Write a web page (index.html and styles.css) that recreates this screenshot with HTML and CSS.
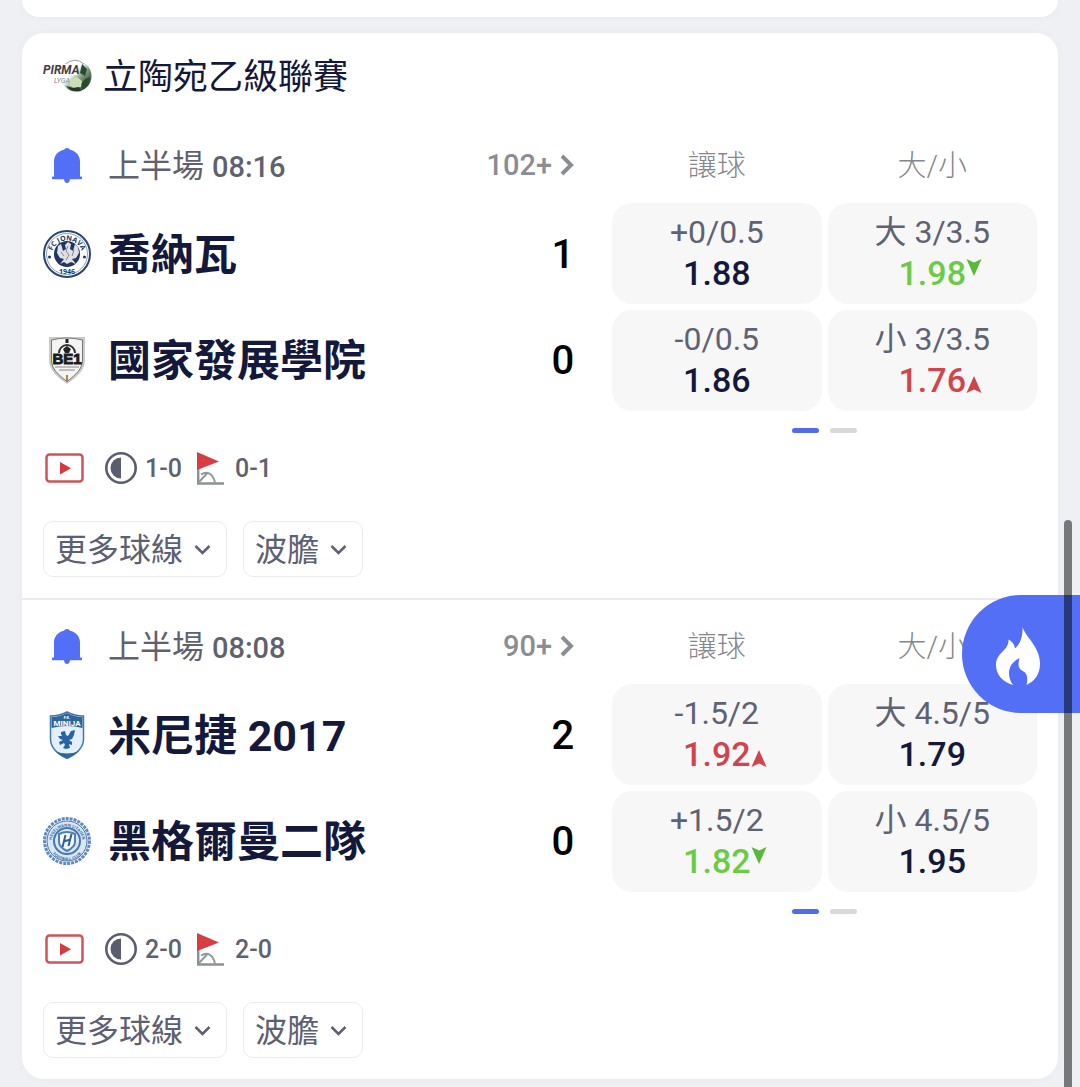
FILE: index.html
```html
<!DOCTYPE html>
<html lang="zh-Hant">
<head>
    <meta charset="UTF-8">
    <meta name="viewport" content="width=device-width, initial-scale=1.0">
    <title>立陶宛乙級聯賽</title>
    <link rel="stylesheet" href="styles.css">
</head>
<body>
    <!-- 共用圖示 -->
    <svg class="sprite" aria-hidden="true">
        <symbol id="icon-bell" viewBox="0 0 30 35">
            <path d="M15 0c1.500 0 2.400.7 2.900 1.800C24 3 28 7.500 28 13.500V28.500h1.200c.5 0 .8.300.8.800v1.200c0 .5-.3.800-.8.800H18c-.2 2.200-1.300 3.700-3 3.700s-2.800-1.500-3-3.700H.8c-.5 0-.8-.3-.8-.8v-1.200c0-.5.300-.8.800-.8H2V13.500C2 7.500 6 3 12.100 1.800 12.600.7 13.500 0 15 0z" fill="#526ff6"/>
        </symbol>
        <symbol id="icon-right" viewBox="0 0 14 22">
            <path d="M2 2l9 9-9 9" fill="none" stroke="#8b8d93" stroke-width="4"/>
        </symbol>
        <symbol id="icon-down" viewBox="0 0 17 11">
            <path d="M1.500 2l7 7 7-7" fill="none" stroke="#5d6072" stroke-width="2.500"/>
        </symbol>
        <symbol id="icon-video" viewBox="0 0 39 30">
            <rect x="1.500" y="1.500" width="36" height="27" rx="3" fill="none" stroke="#d1535a" stroke-width="2.500"/>
            <path d="M15 9v12.500l11-6.200z" fill="#d5383f"/>
        </symbol>
        <symbol id="icon-half" viewBox="0 0 32 32">
            <circle cx="16" cy="16" r="14.700" fill="none" stroke="#5a5d70" stroke-width="2.600"/>
            <path d="M16 5.500v21a10.500 10.500 0 0 1 0-21z" fill="#5a5d70"/>
        </symbol>
        <symbol id="icon-corner" viewBox="0 0 28 33">
            <path d="M1.200 15v16.500H27" fill="none" stroke="#8d9193" stroke-width="2.500"/>
            <path d="M4 22.500c6-4 12-1 14 8M2 30l8-8.500" fill="none" stroke="#8d9c9b" stroke-width="2"/>
            <path d="M0 0l22 9.500L0 18z" fill="#d73d43"/>
        </symbol>
        <symbol id="icon-rise" viewBox="0 0 16 17">
            <path d="M8 0l7.500 17L8 13.500.5 17z" fill="#d0454c"/>
        </symbol>
        <symbol id="icon-drop" viewBox="0 0 16 17">
            <path d="M8 17L.5 0 8 3.500 15.500 0z" fill="#5ab83a"/>
        </symbol>
    </svg>

    <main class="page">
        <div class="card card-prev"></div>

        <section class="card">
            <header class="league">
                <svg class="league-logo" viewBox="0 0 50 34" aria-hidden="true">
                    <defs>
                        <linearGradient id="ball" x1="0" y1="0" x2="1" y2="1">
                            <stop offset="0.400" stop-color="#fff"/>
                            <stop offset="0.600" stop-color="#7d9b7c"/>
                            <stop offset="0.900" stop-color="#1f3526"/>
                        </linearGradient>
                    </defs>
                    <circle cx="33" cy="17" r="15.500" fill="url(#ball)"/>
                    <path d="M21 6q11-9 20-1" fill="none" stroke="#9aa39c" stroke-width="1"/>
                    <path d="M39 5l5 5-2 7-5-3zM42 20l5-2-2 8-5 4-3-4z" fill="#294b30"/>
                    <path d="M28 21l6-3 5 4-1 6-7 1-5-3z" fill="#c9dfb6"/>
                    <path d="M23 27l7 2 6-1 2 4c-6 1-11 0-15-5z" fill="#26382b"/>
                    <path d="M0 5h36l-2 11H0z" fill="#fff"/>
                    <text x="0" y="15" class="logo-pirma">PIRMA</text>
                    <text x="11" y="24" class="logo-lyga">LYGA</text>
                </svg>
                <h1 class="league-name">立陶宛乙級聯賽</h1>
            </header>

            <!-- 喬納瓦 vs 國家發展學院 -->
            <article class="match">
                <div class="columns match-top">
                    <div class="status">
                        <button type="button" class="bell" aria-label="通知"><svg><use href="#icon-bell"/></svg></button>
                        <span class="period">上半場 <span class="num">08:16</span></span>
                        <a href="#" class="more"><span class="num">102+</span><svg><use href="#icon-right"/></svg></a>
                    </div>
                    <div class="market-names">
                        <span>讓球</span>
                        <span>大/小</span>
                    </div>
                </div>
                <div class="columns">
                    <div class="teams">
                        <div class="team">
                            <svg class="crest" viewBox="0 0 48 48" aria-hidden="true">
                                <defs>
                                    <path id="jonava-top" d="M8.500 26a15.500 15.500 0 0 1 31 0"/>
                                </defs>
                                <circle cx="24" cy="24" r="23" fill="#fff" stroke="#28446f" stroke-width="2"/>
                                <circle cx="24" cy="24" r="20.500" fill="none" stroke="#8ba2bd" stroke-width="1"/>
                                <circle cx="24" cy="24" r="13" fill="#20365f"/>
                                <path d="M17 34l4-5-4-1-3-5 1-7 3-2 2 7 3-2-1-4 3-3 3 2-1 5 3 2 2-7 3 3 1 6-3 5-4 1 4 5-5-2-4 2-3-2z" fill="#dfe2e5"/>
                                <path d="M25 16l-2 5 3 4-3 5M18 22l3 4M31 20l-2 6" fill="none" stroke="#7e8898" stroke-width="1"/>
                                <circle cx="6.500" cy="27" r="1.500" fill="#20365f"/>
                                <circle cx="41.500" cy="27" r="1.500" fill="#20365f"/>
                                <text class="crest-ring jonava"><textPath href="#jonava-top" startOffset="50%">FC JONAVA</textPath></text>
                                <text x="24" y="44" class="crest-ring jonava">1946</text>
                            </svg>
                            <h2 class="team-name">喬納瓦</h2>
                            <span class="score">1</span>
                        </div>
                        <div class="team">
                            <svg class="crest" viewBox="0 0 48 48" aria-hidden="true">
                                <path d="M6 1h36v23c0 10-8 17-18 24C14 41 6 34 6 24z" fill="#c9c9c7"/>
                                <path d="M8.500 4Q24 0 39.500 4v20c0 9-7 15-15.500 21.500C15.500 39 8.500 33 8.500 24z" fill="#f4f4f2" stroke="#777" stroke-width="1"/>
                                <path d="M16 17a8 8 0 0 1 16 0" fill="#fff" stroke="#333" stroke-width="2"/>
                                <path d="M24 10l4 3-2 4h-4l-2-4zM22.500 3h3v4h-3z" fill="#222"/>
                                <path d="M12 31h24M16 34h16" stroke="#888" stroke-width="1"/>
                                <path d="M23 39h2v7h-2z" fill="#ac8440"/>
                                <text x="24" y="28" class="crest-be1">BE1</text>
                            </svg>
                            <h2 class="team-name">國家發展學院</h2>
                            <span class="score">0</span>
                        </div>
                    </div>
                    <div class="odds">
                        <button type="button" class="odd"><span class="line">+0/0.5</span><span class="price">1.88</span></button>
                        <button type="button" class="odd"><span class="line">大 3/3.5</span><span class="price drop">1.98<svg><use href="#icon-drop"/></svg></span></button>
                        <button type="button" class="odd"><span class="line">-0/0.5</span><span class="price">1.86</span></button>
                        <button type="button" class="odd"><span class="line">小 3/3.5</span><span class="price rise">1.76<svg><use href="#icon-rise"/></svg></span></button>
                    </div>
                </div>
                <div class="columns">
                    <div class="pager"><i class="active"></i><i></i></div>
                </div>
                <div class="stats">
                    <svg class="icon-video"><use href="#icon-video"/></svg>
                    <svg class="icon-half"><use href="#icon-half"/></svg>
                    <span class="stat">1-0</span>
                    <svg class="icon-corner"><use href="#icon-corner"/></svg>
                    <span class="stat">0-1</span>
                </div>
                <div class="actions">
                    <button type="button" class="action">更多球線<svg><use href="#icon-down"/></svg></button>
                    <button type="button" class="action">波膽<svg><use href="#icon-down"/></svg></button>
                </div>
            </article>

            <!-- 米尼捷 2017 vs 黑格爾曼二隊 -->
            <article class="match">
                <div class="columns match-top">
                    <div class="status">
                        <button type="button" class="bell" aria-label="通知"><svg><use href="#icon-bell"/></svg></button>
                        <span class="period">上半場 <span class="num">08:08</span></span>
                        <a href="#" class="more"><span class="num">90+</span><svg><use href="#icon-right"/></svg></a>
                    </div>
                    <div class="market-names">
                        <span>讓球</span>
                        <span>大/小</span>
                    </div>
                </div>
                <div class="columns">
                    <div class="teams">
                        <div class="team">
                            <svg class="crest" viewBox="0 0 48 48" aria-hidden="true">
                                <path d="M24 1q8 4 16.500 4v23c0 9-7 15-16.500 19.500C14.500 43 7.500 37 7.500 28V5Q16 5 24 1z" fill="#e3effa" stroke="#4379ac" stroke-width="1.500"/>
                                <path d="M24 2q8 4 15.500 4v11Q24 13 8.500 17V6Q16 6 24 2z" fill="#2d659d"/>
                                <path d="M12 40q12 5 24 0-5 5-12 7-7-2-12-7z" fill="#2d659d"/>
                                <path d="M18 21l4-1 1 4 2 1 3-5 4-1-1 5-2 4-3 1 3 2v3l-3-1 1 4-4 1-3-1 2-3-1-2-4 2-1-3 4-2-3-1-2-3 4 0-1-2z" fill="#2764a5"/>
                                <text x="24" y="8" class="crest-fk">F.K.</text>
                                <text x="24" y="14.500" class="crest-minija">MINIJA</text>
                            </svg>
                            <h2 class="team-name">米尼捷 2017</h2>
                            <span class="score">2</span>
                        </div>
                        <div class="team">
                            <svg class="crest" viewBox="0 0 48 48" aria-hidden="true">
                                <defs>
                                    <path id="heg-top" d="M8.500 25a15.500 15.500 0 0 1 31 0"/>
                                    <path id="heg-bottom" d="M5.500 25a18.500 18.500 0 0 0 37 0"/>
                                </defs>
                                <circle cx="24" cy="24" r="22.500" fill="#eef4fa" stroke="#5f8abb" stroke-width="3" stroke-dasharray="3 1"/>
                                <circle cx="24" cy="24" r="20" fill="#d9e6f3" stroke="#4677b0" stroke-width="1"/>
                                <circle cx="24" cy="24" r="13" fill="#d9e6f3" stroke="#4677b0" stroke-width="2"/>
                                <path d="M16 17q8-4 16 0v8q0 5-8 9-8-4-8-9z" fill="#f7fafc" stroke="#4d7fb8" stroke-width="2"/>
                                <path d="M22.500 18l-3 12M28.500 17l-3 12M20.500 24.500l7-2" fill="none" stroke="#315f99" stroke-width="2"/>
                                <text class="crest-ring heg"><textPath href="#heg-top" startOffset="50%">HEGELMANN LITAUEN</textPath></text>
                                <text class="crest-ring heg"><textPath href="#heg-bottom" startOffset="50%">FOOTBALL CLUB</textPath></text>
                            </svg>
                            <h2 class="team-name">黑格爾曼二隊</h2>
                            <span class="score">0</span>
                        </div>
                    </div>
                    <div class="odds">
                        <button type="button" class="odd"><span class="line">-1.5/2</span><span class="price rise">1.92<svg><use href="#icon-rise"/></svg></span></button>
                        <button type="button" class="odd"><span class="line">大 4.5/5</span><span class="price">1.79</span></button>
                        <button type="button" class="odd"><span class="line">+1.5/2</span><span class="price drop">1.82<svg><use href="#icon-drop"/></svg></span></button>
                        <button type="button" class="odd"><span class="line">小 4.5/5</span><span class="price">1.95</span></button>
                    </div>
                </div>
                <div class="columns">
                    <div class="pager"><i class="active"></i><i></i></div>
                </div>
                <div class="stats">
                    <svg class="icon-video"><use href="#icon-video"/></svg>
                    <svg class="icon-half"><use href="#icon-half"/></svg>
                    <span class="stat">2-0</span>
                    <svg class="icon-corner"><use href="#icon-corner"/></svg>
                    <span class="stat">2-0</span>
                </div>
                <div class="actions">
                    <button type="button" class="action">更多球線<svg><use href="#icon-down"/></svg></button>
                    <button type="button" class="action">波膽<svg><use href="#icon-down"/></svg></button>
                </div>
            </article>
        </section>
    </main>

    <!-- 熱門浮動按鈕 -->
    <button type="button" class="hot" aria-label="熱門">
        <svg viewBox="0 0 44 58" aria-hidden="true">
            <path d="M26.500 0C29 9 44 20 44 36.500 44 47 39 54 30.500 58c1.500-6 1-10-2-13-4-2-6-4-6-8 0-2 .5-4 1-6-6 3-10.500 8-10.500 15 0 4 1 8 4 12C7 55 0 48 0 38 0 25 13 24 12.500 12.500c4 2 6 5 6.500 9 5-4 8-12 7.500-21.500z" fill="#fff"/>
        </svg>
    </button>
    <div class="scroll-thumb"></div>
</body>
</html>
```
FILE: styles.css
```css
body {
    margin: 0;
    background-color: #eff0f4;
    color: #14183a;
    font-family: Roboto, "Noto Sans CJK TC", sans-serif;
}
button {
    margin: 0;
    padding: 0;
    border: none;
    background: none;
    color: inherit;
    font-family: inherit;
    cursor: pointer;
}
.sprite {
    position: absolute;
    width: 0;
    height: 0;
}
.page {
    padding: 0 22px 8px;
}
.card {
    background: #fff;
    border-radius: 22px;
    box-shadow: 0 0 10px rgba(30, 35, 60, 0.03);
}
.card-prev {
    height: 17px;
    margin-bottom: 16px;
    border-radius: 0 0 22px 22px;
}

/* 聯賽標題 */
.league {
    display: flex;
    align-items: center;
    gap: 10px;
    height: 86px;
    padding: 0 21px;
}
.league-logo {
    width: 50px;
    height: 34px;
}
.logo-pirma {
    font: italic bold 12px Roboto, sans-serif;
    fill: #3f4145;
}
.logo-lyga {
    font: italic 7px Roboto, sans-serif;
    fill: #85888c;
}
.league-name {
    margin: 0;
    padding-top: 4px;
    font-size: 35px;
    line-height: 50px;
    font-weight: 400;
}

/* 賽事 */
.match {
    padding: 18px 21px 21px;
}
.match + .match {
    border-top: 2px solid #e9eaed;
}
.columns {
    display: grid;
    grid-template-columns: 5fr 4fr;
    column-gap: 38px;
}
.match-top {
    height: 56px;
    margin-bottom: 10px;
}
.status {
    display: flex;
    align-items: center;
    color: #5f626e;
    font-size: 32px;
}
.period {
    padding-bottom: 4px;
}
.bell {
    width: 48px;
    margin-right: 17px;
}
.bell svg {
    display: block;
    width: 30px;
    height: 35px;
    margin: 0 auto;
}
.num {
    font-size: 29px;
    font-weight: 500;
}
.more {
    display: flex;
    align-items: center;
    gap: 8px;
    margin-left: auto;
    color: #8b8d93;
    text-decoration: none;
}
.more svg {
    width: 14px;
    height: 22px;
}
.market-names, .odds {
    display: grid;
    grid-template-columns: 1fr 1fr;
    gap: 6px;
}
.market-names {
    align-items: center;
    padding-bottom: 4px;
    text-align: center;
    color: #85878d;
    font-size: 29px;
    font-weight: 300;
}
.teams {
    display: grid;
    grid-template-rows: 1fr 1fr;
    row-gap: 4px;
}
.team {
    display: flex;
    align-items: center;
}
.crest {
    width: 48px;
    height: 48px;
    margin-right: 17px;
}
.crest-ring {
    text-anchor: middle;
    font-family: "Open Sans", sans-serif;
    font-weight: 700;
}
.jonava {
    font-size: 7px;
    fill: #20365f;
}
.heg {
    font-size: 4px;
    fill: #3d6da8;
}
.crest-be1 {
    font: bold 15px "Liberation Sans", sans-serif;
    text-anchor: middle;
    fill: #1d1d1d;
    stroke: #1d1d1d;
}
.crest-fk {
    font: bold 4px Roboto, sans-serif;
    text-anchor: middle;
    fill: #fff;
}
.crest-minija {
    font: bold 8px Roboto, sans-serif;
    text-anchor: middle;
    fill: #fff;
}
.team-name {
    margin: 0;
    padding-top: 1px;
    font-size: 43px;
    line-height: 60px;
    font-weight: 700;
}
.score {
    margin-left: auto;
    color: #000;
    font-size: 40px;
    font-weight: 500;
}

/* 賠率 */
.odd {
    display: flex;
    flex-direction: column;
    align-items: center;
    justify-content: center;
    height: 101px;
    padding-bottom: 2px;
    border-radius: 20px;
    background: #f7f7f7;
}
.line {
    color: #5f6272;
    font-size: 32px;
    line-height: 40px;
    white-space: nowrap;
}
.price {
    position: relative;
    font-size: 34px;
    line-height: 42px;
    font-weight: 500;
}
.price svg {
    position: absolute;
    left: 100%;
    width: 16px;
    height: 17px;
}
.rise {
    color: #d0454c;
}
.rise svg {
    bottom: 8px;
}
.drop {
    color: #6bcb45;
}
.drop svg {
    top: 7px;
}
.pager {
    grid-column: 2;
    display: flex;
    justify-content: center;
    gap: 11px;
    margin-top: 17px;
}
.pager i {
    width: 27px;
    height: 5px;
    border-radius: 3px;
    background: #d9d9d9;
}
.pager .active {
    background: #526be6;
}

/* 半場與角球 */
.stats {
    display: flex;
    align-items: center;
    height: 36px;
    margin: 17px 0 35px;
    padding-left: 2px;
    color: #5f626e;
}
.icon-video {
    width: 39px;
    height: 30px;
    margin-right: 21px;
}
.icon-half {
    width: 32px;
    height: 32px;
    margin-right: 8px;
}
.icon-corner {
    width: 28px;
    height: 33px;
    margin: 0 10px 0 15px;
}
.stat {
    font-size: 25px;
    font-weight: 500;
}
.actions {
    display: flex;
    gap: 16px;
}
.action {
    display: flex;
    align-items: center;
    gap: 11px;
    height: 56px;
    padding: 0 15px 4px 11px;
    border: 1px solid #ececee;
    border-radius: 10px;
    color: #5d6072;
    font-size: 32px;
}
.action svg {
    width: 17px;
    height: 11px;
    margin-top: 4px;
}

/* 浮動元素 */
.hot {
    position: fixed;
    top: 595px;
    right: 0;
    width: 118px;
    height: 118px;
    padding-right: 6px;
    border-radius: 59px 0 0 59px;
    background: #526ff6;
}
.hot svg {
    display: block;
    width: 44px;
    height: 58px;
    margin: 4px auto 0;
}
.scroll-thumb {
    position: fixed;
    top: 520px;
    right: 8px;
    bottom: 0;
    width: 8px;
    border-radius: 4px 4px 0 0;
    background: rgba(0, 0, 0, 0.5);
}
```
